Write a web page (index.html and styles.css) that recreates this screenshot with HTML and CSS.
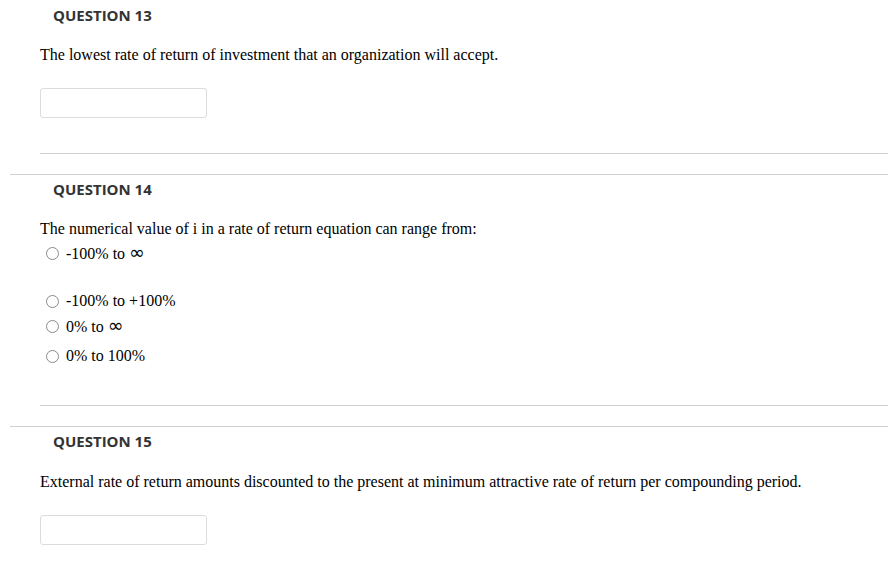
FILE: index.html
```html
<!DOCTYPE html>
<html>
<head>
<meta charset="utf-8">
<link rel="stylesheet" href="styles.css">
</head>
<body>
<div class="page">
  <section class="question first">
    <h2 class="q-title">QUESTION 13</h2>
    <div class="q-body">
      <p class="q-text">The lowest rate of return of investment that an organization will accept.</p>
      <div class="answer-box"></div>
    </div>
    <div class="q-rule"></div>
  </section>

  <section class="question">
    <h2 class="q-title">QUESTION 14</h2>
    <div class="q-body">
      <p class="q-text">The numerical value of i in a rate of return equation can range from:</p>
      <ul class="options">
        <li class="opt opt-a"><span class="radio"></span><span class="opt-label">-100% to <span class="inf">∞</span></span></li>
        <li class="opt opt-b"><span class="radio"></span><span class="opt-label">-100% to +100%</span></li>
        <li class="opt opt-c"><span class="radio"></span><span class="opt-label">0% to <span class="inf">∞</span></span></li>
        <li class="opt opt-d"><span class="radio"></span><span class="opt-label">0% to 100%</span></li>
      </ul>
    </div>
    <div class="q-rule q-rule-radio"></div>
  </section>

  <section class="question">
    <h2 class="q-title">QUESTION 15</h2>
    <div class="q-body">
      <p class="q-text q-text-low">External rate of return amounts discounted to the present at minimum attractive rate of return per compounding period.</p>
      <div class="answer-box"></div>
    </div>
  </section>
</div>
</body>
</html>
```

FILE: styles.css
```css
html, body {
  margin: 0;
  padding: 0;
  background: #ffffff;
}

.page {
  width: 889px;
  height: 574px;
  overflow: hidden;
}

.question {
  margin-left: 10px;
  width: 878px;
  border-top: 1px solid #d0d0d0;
}

.question.first {
  border-top: none;
}

.q-title {
  margin: 0;
  padding: 6px 0 0 43px;
  height: 18px;
  font-family: "Open Sans", sans-serif;
  font-weight: 700;
  font-size: 15px;
  line-height: 18px;
  color: #333333;
}

.question:not(.first) .q-title {
  padding-top: 5px;
}

.q-body {
  padding-left: 30px;
}

.q-text {
  margin: 0;
  padding-top: 21px;
  font-family: "Liberation Serif", serif;
  font-size: 16px;
  line-height: 20px;
  color: #000000;
}

.q-text-low {
  padding-top: 22px;
}

.answer-box {
  margin-top: 23px;
  width: 165px;
  height: 28px;
  border: 1px solid #dcdcdc;
  border-radius: 3px;
  background: #ffffff;
}

.q-rule {
  margin: 35px 0 20px 30px;
  height: 1px;
  background: #d0d0d0;
}

.q-rule-radio {
  margin-top: 39px;
}

.options {
  list-style: none;
  margin: 0;
  padding: 0;
}

.opt {
  display: flex;
  align-items: center;
  height: 20px;
  font-family: "Liberation Serif", serif;
  font-size: 16px;
  color: #000000;
}

.opt-a { margin-top: 4px; }
.opt-b { margin-top: 28px; }
.opt-c { margin-top: 5px; }
.opt-d { margin-top: 10px; }

.radio {
  box-sizing: border-box;
  width: 13px;
  height: 13px;
  margin: 0 7px 0 6px;
  border: 1px solid #8a8a8a;
  border-radius: 50%;
  background: #ffffff;
}

.inf {
  font-family: "DejaVu Sans", sans-serif;
  font-size: 19px;
  line-height: 1;
}
```
